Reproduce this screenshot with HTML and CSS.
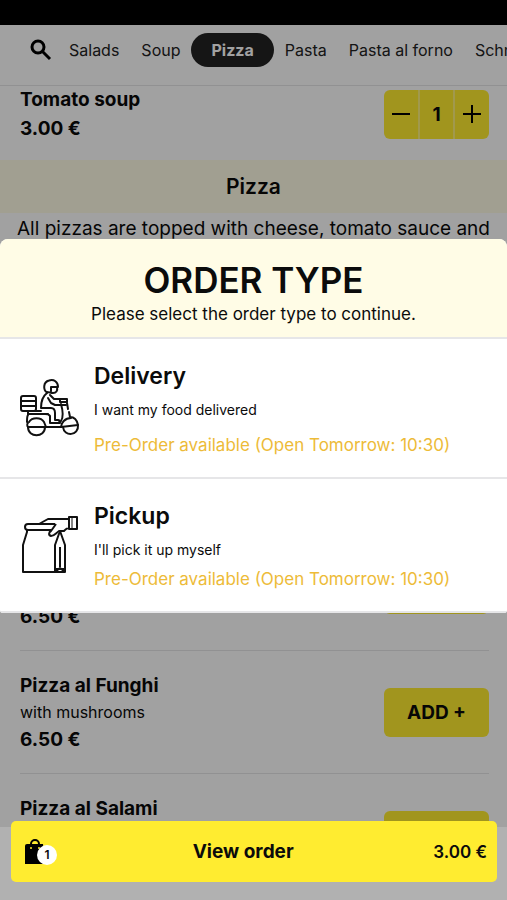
FILE: index.html
```
<!DOCTYPE html>
<html lang="en">
<head>
    <meta charset="UTF-8">
    <meta name="viewport" content="width=device-width, initial-scale=1">
    <title>Order - Menu</title>
    <link rel="stylesheet" href="styles.css">
</head>
<body>
    <div class="status-bar"></div>

    <nav class="category-nav">
        <button type="button" class="search-btn" aria-label="Search">
            <svg width="22" height="22" viewBox="0 0 22 22" fill="none" stroke="#000">
                <circle cx="8" cy="8" r="6" stroke-width="3"/>
                <path d="M12 12l8 8" stroke-width="3"/>
            </svg>
        </button>
        <a href="#salads">Salads</a>
        <a href="#soup">Soup</a>
        <a href="#pizza" class="active">Pizza</a>
        <a href="#pasta">Pasta</a>
        <a href="#forno">Pasta al forno</a>
        <a href="#schnitzel">Schnitzel</a>
    </nav>

    <main>
        <section id="soup">
            <div class="item item-last">
                <div class="item-info">
                    <h3>Tomato soup</h3>
                    <p class="price">3.00 €</p>
                </div>
                <div class="stepper">
                    <button type="button" aria-label="Remove one">
                        <svg width="18" height="18" viewBox="0 0 18 18" stroke="#000" stroke-width="2"><path d="M0 9h18"/></svg>
                    </button>
                    <span>1</span>
                    <button type="button" aria-label="Add one">
                        <svg width="18" height="18" viewBox="0 0 18 18" stroke="#000" stroke-width="2"><path d="M0 9h18M9 0v18"/></svg>
                    </button>
                </div>
            </div>
        </section>

        <section id="pizza">
            <h2 class="category-title">Pizza</h2>
            <p class="category-text">All pizzas are topped with cheese, tomato sauce and oregano.</p>

            <div class="item">
                <div class="item-info">
                    <h3>Pizza Margherita</h3>
                    <p>with basil</p>
                    <p class="price">6.00 €</p>
                </div>
                <button type="button" class="add-btn">ADD +</button>
            </div>
            <div class="item">
                <div class="item-info">
                    <h3>Pizza Cipolla</h3>
                    <p>with onions</p>
                    <p class="price">6.50 €</p>
                </div>
                <button type="button" class="add-btn">ADD +</button>
            </div>
            <div class="item">
                <div class="item-info">
                    <h3>Pizza Spinaci</h3>
                    <p>with spinach</p>
                    <p class="price">6.50 €</p>
                </div>
                <button type="button" class="add-btn">ADD +</button>
            </div>
            <div class="item">
                <div class="item-info">
                    <h3>Pizza al Funghi</h3>
                    <p>with mushrooms</p>
                    <p class="price">6.50 €</p>
                </div>
                <button type="button" class="add-btn">ADD +</button>
            </div>
            <div class="item">
                <div class="item-info">
                    <h3>Pizza al Salami</h3>
                    <p>with salami</p>
                    <p class="price">6.50 €</p>
                </div>
                <button type="button" class="add-btn">ADD +</button>
            </div>
        </section>
    </main>

    <div class="overlay">
        <div class="modal" role="dialog" aria-modal="true" aria-labelledby="modalTitle">
            <div class="modal-header">
                <h1 id="modalTitle">ORDER TYPE</h1>
                <p>Please select the order type to continue.</p>
            </div>
            <button type="button" class="option option-delivery">
                <svg class="option-icon" width="60" height="60" viewBox="0 -1 60 60" fill="none" stroke="#111" stroke-width="2" stroke-linejoin="round" stroke-linecap="round">
                    <!-- box -->
                    <rect x="1" y="17" width="15" height="15" rx="2"/>
                    <path d="M1 22h15M1 27h15"/>
                    <!-- rider -->
                    <path d="M27 13.500C23 11 23 3 29 1.500C34 0 38 3 38 8H31v4M37 8c1 4-1 6-4 6c-2 0-4-1-6-1"/>
                    <path d="M27 14c-4 3-6 9-6 15h10c3 0 4 2 4 5v7h3c2 0 2 3 2 3H30v-7c-1-2-3-2-5-2H9"/>
                    <path d="M28 19l3 5l4 2h11M30 16l4 4h6"/>
                    <path d="M40 20h7v3h-7z"/>
                    <!-- scooter -->
                    <path d="M41 25c2 7 2 14 0 17l-3 2M47 24l1 6M49 33l1 5c4 0 7 3 8 8L41 48H26"/>
                    <path d="M8 32v4c-1 1-1 4-1 7M9 32h12M12 35h16M8 44c-1 0-1 3 0 4M41 48c0-4 4-9 10-9"/>
                    <path d="M9 43c3-5 12-5 15 0l2 5H8"/>
                    <path d="M8 48c0 11 17 11 17 0M43 48c1 10 16 9 15-2"/>
                </svg>
                <span class="option-text">
                    <span class="option-name">Delivery</span>
                    <span class="option-desc">I want my food delivered</span>
                    <span class="option-note">Pre-Order available (Open Tomorrow: 10:30)</span>
                </span>
            </button>
            <button type="button" class="option">
                <svg class="option-icon" width="60" height="60" viewBox="0 -1 60 60" fill="none" stroke="#111" stroke-width="2" stroke-linejoin="round">
                    <!-- bag -->
                    <path d="M7 14v2L3 29v27h42V29l-5-14"/>
                    <path d="M40 15l-5 14v27M40 31v20M35 56l5-4l5 4M35 53h10"/>
                    <path d="M35 8H8c-4 0-4 6 0 6h23"/>
                    <!-- hand -->
                    <path d="M19 8l9-5h21v9c-3 0-4 2-5 3h-5c-3 2-5 5-8 5c-3-1-2-4 0-5l5-7"/>
                    <rect x="49" y="1" width="8" height="12"/>
                    <path d="M52 1v12" stroke-width="1"/>
                </svg>
                <span class="option-text">
                    <span class="option-name">Pickup</span>
                    <span class="option-desc">I'll pick it up myself</span>
                    <span class="option-note">Pre-Order available (Open Tomorrow: 10:30)</span>
                </span>
            </button>
        </div>
    </div>

    <footer class="order-bar">
        <button type="button" class="order-btn">
            <span class="bag">
                <svg width="20" height="25" viewBox="0 0 20 25">
                    <path d="M6 7V5a4 4 0 0 1 8 0v2" fill="none" stroke="#000" stroke-width="2"/>
                    <path d="M2 5h16l2 20H0V7a2 2 0 0 1 2-2z"/>
                    <circle cx="6" cy="9" r="1" fill="#ffec30"/>
                    <circle cx="14" cy="9" r="1" fill="#ffec30"/>
                </svg>
                <span class="badge">1</span>
            </span>
            <span class="order-label">View order</span>
            <span class="order-total">3.00 €</span>
        </button>
    </footer>
</body>
</html>
```
FILE: styles.css
```
:root {
    --yellow: #ffec30;
    --cream: #fffce6;
    --amber: #edbb38;
    --line: #e6e6e8;
    --text: #0b0b0b;
}

* { box-sizing: border-box; margin: 0; padding: 0; }

body {
    background: #fff;
    font-family: Inter, 'Liberation Sans', sans-serif;
    font-size: 16px;
    line-height: 27px;
    color: var(--text);
    height: 100vh;
    overflow: hidden;
}

button {
    border: none;
    background: none;
    font-family: inherit;
    color: inherit;
    cursor: pointer;
}

.status-bar {
    height: 25px;
    background: #000;
}

/* category navigation */
.category-nav {
    display: flex;
    align-items: center;
    height: 61px;
    padding: 0 0 11px 30px;
    border-bottom: 1px solid var(--line);
    overflow: hidden;
    white-space: nowrap;
}

.category-nav a {
    padding: 0 11px;
    line-height: 34px;
    color: #222;
    text-decoration: none;
}

.category-nav a.active {
    padding: 0 20px;
    border-radius: 17px;
    background: #222;
    color: #fff;
    font-weight: 700;
}

.search-btn {
    display: flex;
    margin-right: 6px;
}

/* menu */
.item {
    display: flex;
    align-items: center;
    justify-content: space-between;
    margin: 0 18px 0 20px;
    padding: 21px 0 20px;
    border-bottom: 1px solid var(--line);
}

.item-last {
    padding: 0 0 18px;
    border-bottom: none;
}

.item-last .price {
    margin-top: 2px;
}

.item h3,
.price {
    font-size: 19px;
    font-weight: 700;
}

.stepper,
.add-btn {
    width: 105px;
    height: 49px;
    border-radius: 6px;
    background: var(--yellow);
    font-size: 19px;
    font-weight: 700;
}

.stepper {
    display: flex;
    overflow: hidden;
}

.stepper > * {
    display: flex;
    flex: 1;
    align-items: center;
    justify-content: center;
}

.stepper span {
    border: 2px solid #fff27a;
    border-width: 0 2px;
}

.category-title {
    background: var(--cream);
    font-size: 21px;
    font-weight: 600;
    line-height: 53px;
    text-align: center;
}

.category-text {
    padding: 2px 12px 13px;
    font-size: 19px;
    text-align: center;
}

/* order type modal */
.overlay {
    position: fixed;
    inset: 0;
    display: flex;
    align-items: center;
    padding-bottom: 49px;
    background: rgba(0, 0, 0, 0.37);
}

.modal {
    width: 100%;
    border-radius: 8px 8px 3px 3px;
    background: #fff;
    overflow: hidden;
}

.modal-header {
    padding: 20px 16px 10px;
    border-bottom: 2px solid var(--line);
    background: var(--cream);
    text-align: center;
}

.modal-header h1 {
    font-size: 35px;
    font-weight: 600;
    line-height: 42px;
}

.modal-header p {
    font-size: 17px;
    line-height: 26px;
}

.option {
    display: flex;
    align-items: center;
    gap: 14px;
    width: 100%;
    padding: 20px;
    border-bottom: 2px solid var(--line);
    text-align: left;
}

.option-icon {
    flex: none;
}

.option-text {
    display: flex;
    flex-direction: column;
}

.option-name {
    margin-bottom: 7px;
    font-size: 23px;
    font-weight: 600;
    line-height: 34px;
}

.option-desc {
    margin-bottom: 7px;
    font-size: 14px;
    line-height: 20px;
}

.option-delivery .option-desc {
    margin-bottom: 13px;
}

.option-note {
    font-size: 17px;
    line-height: 24px;
    color: var(--amber);
}

/* order bar */
.order-bar {
    position: fixed;
    right: 0;
    bottom: 0;
    left: 0;
    padding: 0 10px 18px 11px;
    background: #b1b1b1;
}

.order-btn {
    display: flex;
    align-items: center;
    justify-content: space-between;
    width: 100%;
    height: 61px;
    margin-top: -6px;
    padding: 0 10px 0 14px;
    border-radius: 5px;
    background: var(--yellow);
    font-weight: 600;
}

.bag {
    position: relative;
    display: flex;
    width: 28px;
}

.badge {
    position: absolute;
    top: 6px;
    left: 12px;
    width: 20px;
    height: 20px;
    border-radius: 50%;
    background: #fff;
    font-size: 12px;
    line-height: 20px;
}

.order-label {
    font-size: 19px;
    font-weight: 700;
}

.order-total {
    font-size: 17px;
    text-align: right;
}
```
